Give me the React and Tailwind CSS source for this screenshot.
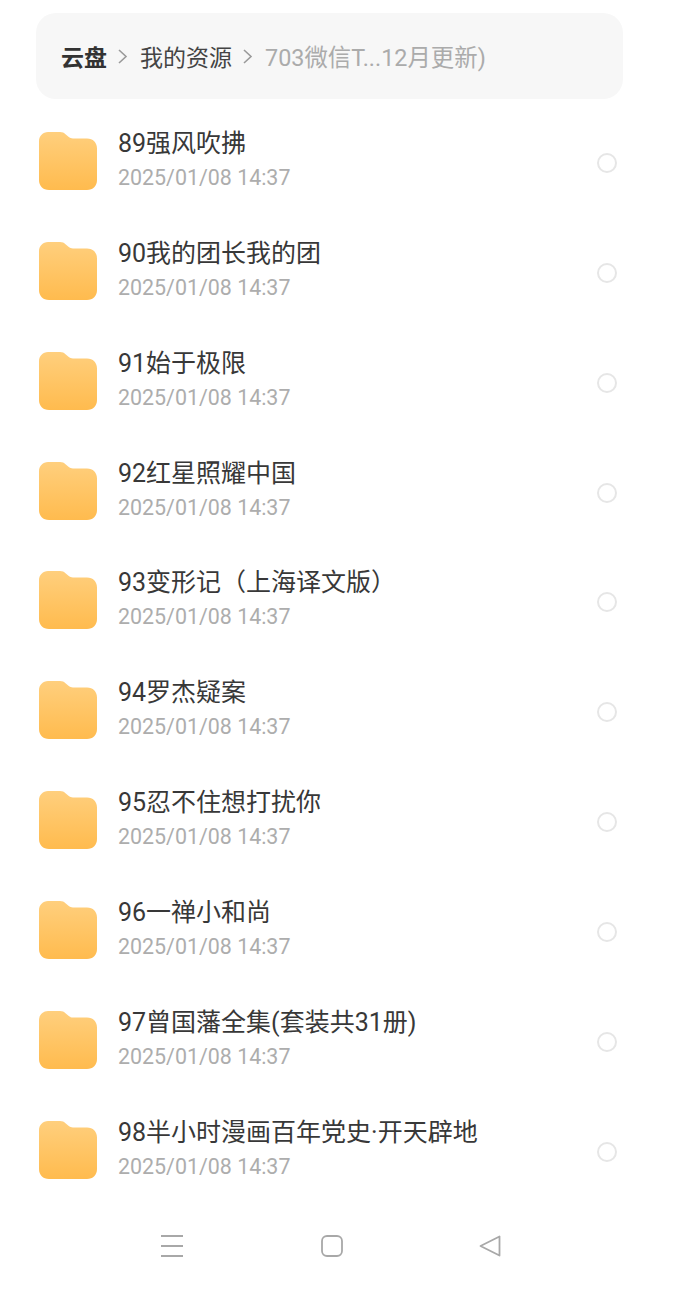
import React from "react";

const FONT = "font-['Roboto','Noto_Sans_CJK_SC',sans-serif]";

const files = [
  "89强风吹拂",
  "90我的团长我的团",
  "91始于极限",
  "92红星照耀中国",
  "93变形记（上海译文版）",
  "94罗杰疑案",
  "95忍不住想打扰你",
  "96一禅小和尚",
  "97曾国藩全集(套装共31册)",
  "98半小时漫画百年党史·开天辟地",
];

const FolderIcon = ({ id }) => (
  <svg width="58" height="58" viewBox="0 0 58 58" className="shrink-0">
    <defs>
      <linearGradient id={id} x1="0" y1="0" x2="0" y2="1">
        <stop offset="0" stopColor="#ffcf7d" />
        <stop offset="1" stopColor="#ffbb4e" />
      </linearGradient>
    </defs>
    <path
      d="M9 0H21C23.500 0 25 .8 26.500 2.200L29.500 4.800C31 6 32 6.500 34 6.500H48C54 6.500 58 10.500 58 16.500V48C58 54 54 58 48 58H10C4 58 0 54 0 48V9C0 4 4 0 9 0Z"
      fill={`url(#${id})`}
    />
  </svg>
);

const Chevron = () => (
  <svg width="12" height="18" viewBox="0 0 12 18" className="shrink-0 mb-[5px]">
    <path d="M2 2L9 8.500L2 15" fill="none" stroke="#9a9a9a" strokeWidth="1.600" />
  </svg>
);

const FileRow = ({ name, index }) => (
  <div className="flex items-center h-[109.87px] pl-[39px] pr-[81px]">
    <div className="mb-1 flex">
      <FolderIcon id={`folder-${index}`} />
    </div>
    <div className="ml-[21px] flex-1 min-w-0 mb-[4px]">
      <div className="text-[25px] leading-[34px] text-[#383838] whitespace-nowrap">{name}</div>
      <div className="text-[21.4px] leading-[34px] text-[#adadad] whitespace-nowrap">2025/01/08 14:37</div>
    </div>
    <div className="w-[20px] h-[20px] rounded-full border-2 border-[#e6e6e6]" />
  </div>
);

export default function App() {
  return (
    <div className={`w-[698px] h-[1307px] bg-white overflow-hidden flex flex-col ${FONT}`}>
      {/* Breadcrumb */}
      <div className="mt-[13px] ml-[36px] w-[587px] h-[86px] shrink-0 rounded-[20px] bg-[#f7f7f7] flex items-center pl-[25px] pt-[6px] text-[23px]">
        <span className="font-bold text-[#333333]">云盘</span>
        <span className="ml-[10px] mr-[11px] flex"><Chevron /></span>
        <span className="text-[#444444]">我的资源</span>
        <span className="ml-[10px] mr-[11px] flex"><Chevron /></span>
        <span className="text-[23.4px] text-[#ababab]">703微信T...12月更新)</span>
      </div>

      {/* File list */}
      <div className="mt-[9px] flex flex-col">
        {files.map((name, i) => (
          <FileRow key={name} name={name} index={i} />
        ))}
      </div>

      {/* Android nav bar */}
      <div className="flex-1 flex items-center justify-between pl-[160px] pr-[197px] pb-[22px]">
        <svg width="24" height="24" viewBox="0 0 24 24">
          <path d="M1 2H23M1 12H23M1 22H23" stroke="#a8a8a8" strokeWidth="1.800" fill="none" />
        </svg>
        <svg width="22" height="22" viewBox="0 0 22 22">
          <rect x="1" y="1" width="20" height="20" rx="5" stroke="#a8a8a8" strokeWidth="1.800" fill="none" />
        </svg>
        <svg width="22" height="22" viewBox="0 0 22 22">
          <path d="M20.500 1.500V20.500L1.500 11Z" stroke="#a8a8a8" strokeWidth="1.800" strokeLinejoin="round" fill="none" />
        </svg>
      </div>
    </div>
  );
}
